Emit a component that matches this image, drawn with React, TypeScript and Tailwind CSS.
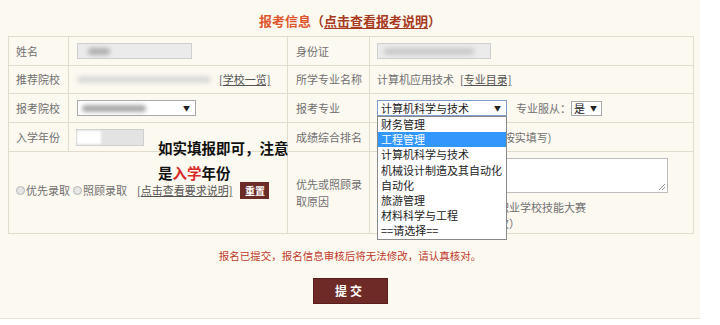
import React from "react";

const Blur = ({ w, c = "#b9b9b9" }: { w: number; c?: string }) => (
  <div className="h-[7px] rounded-sm blur-[2px]" style={{ width: w, background: c }} />
);

export default function App() {
  const majors = [
    "财务管理",
    "工程管理",
    "计算机科学与技术",
    "机械设计制造及其自动化",
    "自动化",
    "旅游管理",
    "材料科学与工程",
    "==请选择==",
  ];
  return (
    <div className="w-[720px] h-[325px] bg-white font-['Noto_Sans_CJK_SC','Noto_Sans',sans-serif] overflow-hidden">
      <div className="relative w-[700px] h-[319px] bg-[#fcf9f0] border-b border-[#e9e3d5] px-[8px]">
        {/* title */}
        <div className="h-[36px] flex items-center justify-center pt-[4px] text-[13px] font-bold leading-none">
          <span className="text-[#e0562c]">报考信息</span>
          <span className="text-[#a83a22]">（<span className="underline underline-offset-2">点击查看报考说明</span>）</span>
        </div>

        <table className="w-[685px] table-fixed border-collapse text-[11px] text-[#707070]">
          <colgroup>
            <col className="w-[60px]" />
            <col className="w-[219px]" />
            <col className="w-[82px]" />
            <col className="w-[324px]" />
          </colgroup>
          <tbody>
            <tr className="h-[29px]">
              <td className="border border-[#e2dccd] pl-[7px]">姓名</td>
              <td className="border border-[#e2dccd] pl-[8px]">
                <div className="w-[115px] h-[16px] bg-[#ebebeb] border border-[#cfcfcf] flex items-center pl-[10px]">
                  <Blur w={22} c="#b0b0b0" />
                </div>
              </td>
              <td className="border border-[#e2dccd] pl-[8px]">身份证</td>
              <td className="border border-[#e2dccd] pl-[7px]">
                <div className="w-[114px] h-[16px] bg-[#ebebeb] border border-[#cfcfcf] flex items-center pl-[6px]">
                  <Blur w={90} c="#cacaca" />
                </div>
              </td>
            </tr>
            <tr className="h-[28px]">
              <td className="border border-[#e2dccd] pl-[7px]">推荐院校</td>
              <td className="border border-[#e2dccd] pl-[8px]">
                <div className="flex items-center gap-[8px]">
                  <Blur w={134} c="#dadada" />
                  <span className="text-[#555] underline">[学校一览]</span>
                </div>
              </td>
              <td className="border border-[#e2dccd] pl-[8px]">所学专业名称</td>
              <td className="border border-[#e2dccd] pl-[7px]">
                <span>计算机应用技术</span>
                <span className="ml-[6px] text-[#555] underline">[专业目录]</span>
              </td>
            </tr>
            <tr className="h-[29px]">
              <td className="border border-[#e2dccd] pl-[7px]">报考院校</td>
              <td className="border border-[#e2dccd] pl-[8px]">
                <div className="w-[119px] h-[16px] bg-white border border-[#aaaaaa] flex items-center justify-between pl-[4px] pr-[5px]">
                  <Blur w={64} c="#a8a8a8" />
                  <span className="text-[7px] text-[#222]">▼</span>
                </div>
              </td>
              <td className="border border-[#e2dccd] pl-[8px]">报考专业</td>
              <td className="border border-[#e2dccd] pl-[7px]">
                <div className="flex items-center">
                  <div className="relative">
                    <div className="w-[130px] h-[16px] bg-white border border-[#7f9ccf] flex items-center justify-between pl-[3px] pr-[5px] text-[#222]">
                      <span>计算机科学与技术</span>
                      <span className="text-[7px]">▼</span>
                    </div>
                    <div className="absolute left-0 top-[16px] z-10 w-[130px] bg-white border border-[#8a8a8a] text-[#222]">
                      {majors.map((m) => (
                        <div
                          key={m}
                          className={
                            m === "工程管理"
                              ? "h-[15.2px] leading-[15.2px] pl-[3px] bg-[#3297fd] text-white"
                              : "h-[15.2px] leading-[15.2px] pl-[3px]"
                          }
                        >
                          {m}
                        </div>
                      ))}
                    </div>
                  </div>
                  <span className="ml-[9px]">专业服从：</span>
                  <div className="w-[31px] h-[15px] bg-white border border-[#aaaaaa] flex items-center justify-between pl-[2px] pr-[4px] text-[#222]">
                    <span>是</span>
                    <span className="text-[7px]">▼</span>
                  </div>
                </div>
              </td>
            </tr>
            <tr className="h-[29px]">
              <td className="border border-[#e2dccd] pl-[7px]">入学年份</td>
              <td className="border border-[#e2dccd] pl-[7px]">
                <div className="w-[68px] h-[17px] bg-[#e3e3e3] border border-[#cfcfcf] flex items-center">
                  <div className="w-[24px] h-[13px] bg-white blur-[1px]" />
                </div>
              </td>
              <td className="border border-[#e2dccd] pl-[8px]">成绩综合排名</td>
              <td className="border border-[#e2dccd] pl-[7px]">
                <div className="flex items-center">
                  <div className="w-[108px] h-[16px] bg-white border border-[#cfcfcf]" />
                  <span className="ml-[4px]">(请按实填写)</span>
                </div>
              </td>
            </tr>
            <tr className="h-[82px]">
              <td colSpan={2} className="border border-[#e2dccd] pl-[7px]">
                <div className="flex items-center pb-[5px]">
                  <span className="w-[9px] h-[9px] rounded-full border border-[#b5b5b5] bg-[#e6e6e6]" />
                  <span className="ml-[1px]">优先录取</span>
                  <span className="ml-[3px] w-[9px] h-[9px] rounded-full border border-[#b5b5b5] bg-[#e6e6e6]" />
                  <span className="ml-[1px]">照顾录取</span>
                  <span className="ml-[10px] text-[#555] underline">[点击查看要求说明]</span>
                  <span className="ml-[8px] w-[29px] h-[17px] bg-[#6b2b27] text-white text-[10px] font-bold flex items-center justify-center">
                    重置
                  </span>
                </div>
              </td>
              <td className="border border-[#e2dccd] pl-[8px] pr-[6px] leading-[17px]">
                优先或照顾录取原因
              </td>
              <td className="border border-[#e2dccd] pl-[7px] align-top pt-[6px]">
                <div className="relative w-[291px] h-[35px] bg-white border border-[#bdbdbd]">
                  <svg className="absolute right-[1px] bottom-[1px]" width="8" height="8" viewBox="0 0 8 8">
                    <path d="M7 1 L1 7 M7 4 L4 7" stroke="#9a9a9a" strokeWidth="1" />
                  </svg>
                </div>
                <div className="mt-[6px] leading-[16px] whitespace-nowrap">
                  （如获得国家或省级以上职业学校技能大赛
                  <br />
                  三等奖以上者，请注明名次）
                </div>
              </td>
            </tr>
          </tbody>
        </table>

        <div className="mt-[15px] text-center text-[10.5px] text-[#c0392b] leading-[14px]">
          报名已提交，报名信息审核后将无法修改，请认真核对。
        </div>
        <div className="mt-[15px] flex justify-center">
          <div className="w-[75px] h-[26px] bg-[#6e2a27] border border-[#5a1f1c] text-white text-[12px] font-bold tracking-[3px] flex items-center justify-center">
            提交
          </div>
        </div>

        {/* annotation overlay */}
        <div className="absolute left-[158px] top-[135px] text-[14.5px] font-bold text-[#111] leading-[25px]">
          <div>如实填报即可，注意</div>
          <div>
            是<span className="text-[#d92b2b]">入学</span>年份
          </div>
        </div>
      </div>
    </div>
  );
}
